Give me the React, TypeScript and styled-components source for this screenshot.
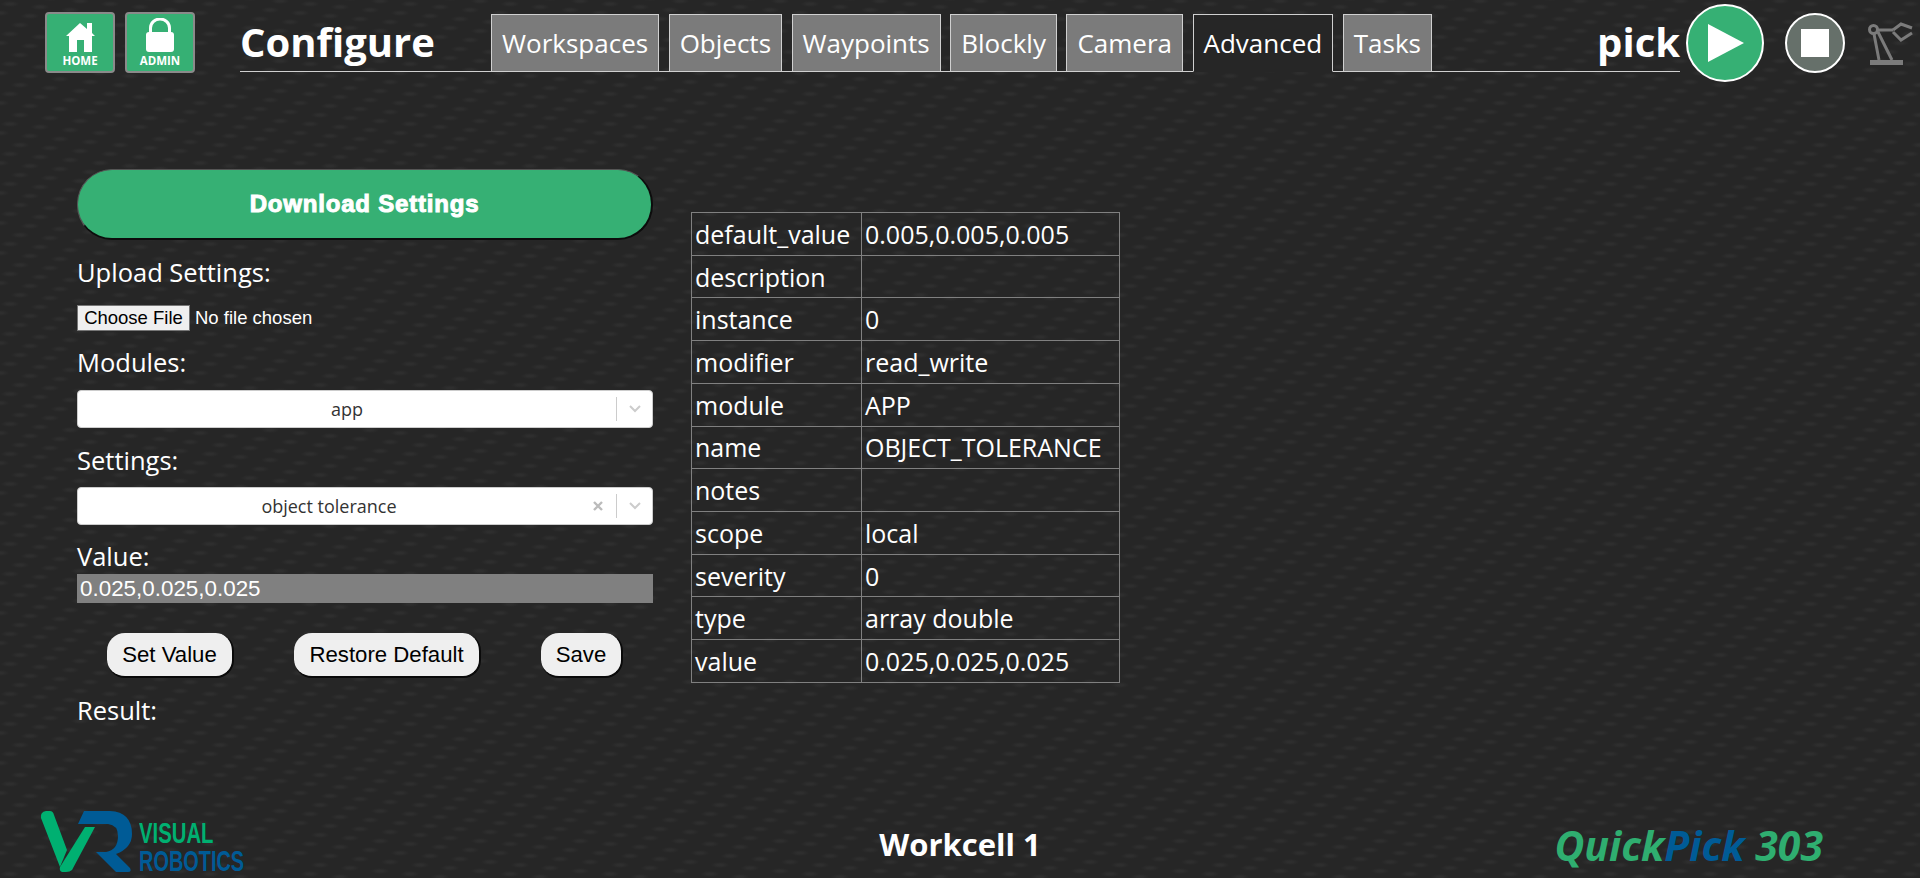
import React from "react";
import styled, { createGlobalStyle } from "styled-components";

const dash = (x: number, y: number) =>
  `radial-gradient(ellipse 9px 3px at ${x}px ${y}px, #2e2e2e 30%, transparent 100%)`;

const carbon = Array.from({ length: 10 }, (_, k) => {
  const x = 10 + 10 * k;
  const y = 4 + ((-9 * k) % 30 + 30) % 30;
  const layers = [dash(x, y)];
  if (x > 90) layers.push(dash(x - 100, y));
  if (y > 26) layers.push(dash(x, y - 30));
  return layers.join(",");
}).join(",");

const Global = createGlobalStyle`
  html, body { margin: 0; padding: 0; height: 100%; overflow: hidden; }
  body {
    background-color: #262626;
    background-image: ${carbon};
    background-size: 100px 30px;
    color: #fff;
    font-family: "Open Sans", "Noto Sans", sans-serif;
  }
`;

const Page = styled.div`
  width: 1920px;
  height: 878px;
  display: flex;
  flex-direction: column;
`;

const Header = styled.header`
  height: 85px;
  display: flex;
  align-items: flex-start;
  padding-left: 45px;
`;

const NavGroup = styled.div`
  display: flex;
  gap: 10px;
  margin-top: 12px;
  width: 195px;
`;

const NavButton = styled.a`
  width: 70px;
  height: 61px;
  box-sizing: border-box;
  border: 2px solid #8a8a8a;
  border-radius: 4px;
  background: #36b074;
  display: flex;
  flex-direction: column;
  align-items: center;
  justify-content: flex-end;
  padding-bottom: 3px;
  gap: 2px;
  font: 700 11.5px/14px "Open Sans", sans-serif;
  color: #fff;
`;

const TitleBar = styled.div`
  width: 1440px;
  height: 72px;
  box-sizing: border-box;
  border-bottom: 1px solid #d0d0d0;
  display: flex;
  align-items: flex-end;
  flex: none;
`;

const Title = styled.h1`
  width: 251px;
  margin: 0;
  font: 700 40px/58px "Open Sans", sans-serif;
  white-space: nowrap;
`;

const Tabs = styled.nav`
  display: flex;
  gap: 9.5px;
  margin-bottom: -1px;
`;

const Tab = styled.div<{ $active?: boolean }>`
  height: 58px;
  box-sizing: border-box;
  border: 1px solid #d0d0d0;
  border-bottom: ${(p) => (p.$active ? "1px solid #262626" : "1px solid #d0d0d0")};
  background: ${(p) => (p.$active ? "#262626" : "#7b7b7b")};
  padding: 0 10px;
  font: 400 26px/56px "Open Sans", sans-serif;
  white-space: nowrap;
`;

const Mode = styled.div`
  margin-left: auto;
  font: 700 40px/58px "Open Sans", sans-serif;
`;

const RoundButton = styled.button<{ $size: number; $bg: string; $top: number; $left: number }>`
  width: ${(p) => p.$size}px;
  height: ${(p) => p.$size}px;
  flex: none;
  margin: ${(p) => p.$top}px 0 0 ${(p) => p.$left}px;
  padding: 0;
  border: 2px solid #fff;
  border-radius: 50%;
  background: ${(p) => p.$bg};
  display: flex;
  align-items: center;
  justify-content: center;
`;

const StopSquare = styled.span`
  display: block;
  width: 28px;
  height: 28px;
  background: #fff;
`;

const RobotIcon = styled.svg`
  flex: none;
  margin: 22px 0 0 23px;
`;

const Main = styled.main`
  display: flex;
  align-items: flex-start;
  padding: 84px 0 0 77px;
`;

const Column = styled.section`
  width: 576px;
  display: flex;
  flex-direction: column;
`;

const DownloadButton = styled.button`
  height: 71px;
  border: none;
  border-bottom: 2px solid #0c0c0c;
  border-right: 2px solid #0c0c0c;
  border-top: 1px solid #555;
  border-left: 1px solid #555;
  border-radius: 35px;
  background: #36b074;
  color: #fff;
  font: 700 24px "Liberation Sans", Arial, sans-serif;
  -webkit-text-stroke: 1px #fff;
  letter-spacing: 0.8px;
`;

const Label = styled.label<{ $top: number }>`
  display: block;
  margin-top: ${(p) => p.$top}px;
  font: 400 25.5px/34px "Open Sans", sans-serif;
  height: 34px;
  white-space: nowrap;
`;

const FileInput = styled.input`
  margin: 16px 0 0;
  height: 26px;
  font: 400 18.5px "Liberation Sans", Arial, sans-serif;
  color: #fff;
  &::file-selector-button {
    height: 26px;
    width: 113px;
    font: 400 18.5px "Liberation Sans", Arial, sans-serif;
    background: #efefef;
    border: 1px solid #767676;
    border-radius: 0;
    margin-right: 5px;
    padding: 0;
    color: #000;
  }
`;

const Select = styled.div<{ $top: number }>`
  margin-top: ${(p) => p.$top}px;
  height: 38px;
  box-sizing: border-box;
  background: #fff;
  border: 1px solid #ccc;
  border-radius: 4px;
  display: flex;
  align-items: center;
`;

const SelectValue = styled.div`
  flex: 1;
  text-align: center;
  font: 400 18px "Open Sans", sans-serif;
  color: #333;
`;

const Clear = styled.span`
  width: 36px;
  text-align: center;
  color: #bbb;
  display: flex;
  justify-content: center;
`;

const Indicator = styled.span`
  width: 35px;
  height: 24px;
  border-left: 1px solid #ccc;
  display: flex;
  align-items: center;
  justify-content: center;
  color: #ccc;
`;

const ValueInput = styled.input`
  margin: 1px 0 0;
  height: 29px;
  box-sizing: border-box;
  border: none;
  padding: 0 3px;
  background: #808080;
  color: #fff;
  font: 400 22.4px "Liberation Sans", Arial, sans-serif;
  outline: none;
`;

const Actions = styled.div`
  display: flex;
  justify-content: flex-start;
  margin-top: 30px;
  padding-left: 30px;
`;

const ActionButton = styled.button<{ $w: number; $gap: number }>`
  width: ${(p) => p.$w}px;
  height: 45px;
  margin-left: ${(p) => p.$gap}px;
  border: none;
  border-right: 2px solid #0a0a0a;
  border-bottom: 2px solid #0a0a0a;
  border-radius: 18px;
  background: #efefef;
  color: #000;
  padding: 0;
  font: 400 22.2px "Liberation Sans", Arial, sans-serif;
`;

const Table = styled.table`
  margin: 43px 0 0 38px;
  width: 429px;
  height: 471px;
  table-layout: fixed;
  border-collapse: collapse;
`;

const Cell = styled.td<{ $w?: number }>`
  ${(p) => (p.$w ? `width: ${p.$w}px;` : "")}
  border: 1px solid #808080;
  padding: 0 3px;
  box-sizing: border-box;
  font: 400 25px/34px "Open Sans", sans-serif;
  white-space: nowrap;
`;

const Footer = styled.footer`
  margin-top: auto;
  height: 68px;
  display: grid;
  grid-template-columns: 880px 80px 1fr;
  align-items: center;
  padding-left: 40px;
`;

const LogoWrap = styled.div`
  display: flex;
  align-items: flex-end;
  gap: 1px;
  height: 68px;
  margin-top: -8px;
`;

const LogoWords = styled.div`
  display: flex;
  flex-direction: column;
  width: 110px;
  font: 700 30px/28px "Liberation Sans", sans-serif;
  margin-bottom: -1px;
`;

const LogoWord = styled.span<{ $c: string; $sx: number }>`
  display: block;
  color: ${(p) => p.$c};
  white-space: nowrap;
  transform: scaleX(${(p) => p.$sx});
  transform-origin: left center;
`;

const Workcell = styled.div`
  font: 700 31px "Open Sans", sans-serif;
  white-space: nowrap;
  justify-self: center;
`;

const Brand = styled.div`
  justify-self: end;
  margin-right: 97px;
  margin-top: 2px;
  font: italic 700 41px "Open Sans", sans-serif;
  color: #2fae70;
  white-space: nowrap;
`;

const BrandBlue = styled.span`
  color: #005b96;
`;

const tabs = ["Workspaces", "Objects", "Waypoints", "Blockly", "Camera", "Advanced", "Tasks"];
const rows: [string, string][] = [
  ["default_value", "0.005,0.005,0.005"],
  ["description", ""],
  ["instance", "0"],
  ["modifier", "read_write"],
  ["module", "APP"],
  ["name", "OBJECT_TOLERANCE"],
  ["notes", ""],
  ["scope", "local"],
  ["severity", "0"],
  ["type", "array double"],
  ["value", "0.025,0.025,0.025"],
];

const Chevron = () => (
  <svg width="14" height="10" viewBox="0 0 14 10" fill="none" stroke="currentColor" strokeWidth="2">
    <path d="M2 2l5 5 5-5" />
  </svg>
);

export default function App() {
  return (
    <Page>
      <Global />
      <Header>
        <NavGroup>
          <NavButton>
            <svg width="29" height="29" viewBox="0 0 29 29" fill="#fff">
              <path d="M14 0 L21 6 V0 H26 V10 L29 13 H26 V29 H18 V17 H11 V29 H3 V13 H0 Z" />
            </svg>
            HOME
          </NavButton>
          <NavButton>
            <svg width="28" height="34" viewBox="0 0 28 34" fill="#fff">
              <rect x="0" y="14" width="28" height="20" rx="3" />
              <path d="M4.5 15 V10 A9.5 9 0 0 1 23.5 10 V15" fill="none" stroke="#fff" strokeWidth="3" />
            </svg>
            ADMIN
          </NavButton>
        </NavGroup>
        <TitleBar>
          <Title>Configure</Title>
          <Tabs>
            {tabs.map((t) => (
              <Tab key={t} $active={t === "Advanced"}>
                {t}
              </Tab>
            ))}
          </Tabs>
          <Mode>pick</Mode>
        </TitleBar>
        <RoundButton $size={78} $bg="#36b074" $top={4} $left={6}>
          <svg width="38" height="40" viewBox="-2 0 38 40" fill="#fff">
            <path d="M0 1 L36 20 L0 39 Z" />
          </svg>
        </RoundButton>
        <RoundButton $size={60} $bg="#66706a" $top={13} $left={21}>
          <StopSquare />
        </RoundButton>
        <RobotIcon width="46" height="44" viewBox="0 0 46 44" fill="none" stroke="#7b7b7b" strokeWidth="3">
          <rect x="2" y="38" width="33" height="5" fill="#7b7b7b" stroke="none" />
          <circle cx="5.5" cy="7.5" r="4" />
          <path d="M6 12 L11 38 M10 10 L24 38 M10 8 H25" />
          <path d="M25 8 L33 2 L44 6 M25 10 L33 18 L44 11" />
        </RobotIcon>
      </Header>
      <Main>
        <Column>
          <DownloadButton>Download Settings</DownloadButton>
          <Label $top={15}>Upload Settings:</Label>
          <FileInput type="file" />
          <Label $top={14}>Modules:</Label>
          <Select $top={11}>
            <SelectValue>app</SelectValue>
            <Indicator>
              <Chevron />
            </Indicator>
          </Select>
          <Label $top={15}>Settings:</Label>
          <Select $top={10}>
            <SelectValue>object tolerance</SelectValue>
            <Clear>
              <svg width="12" height="12" viewBox="0 0 12 12" stroke="currentColor" strokeWidth="2.4">
                <path d="M2 2l8 8M10 2l-8 8" />
              </svg>
            </Clear>
            <Indicator>
              <Chevron />
            </Indicator>
          </Select>
          <Label $top={14}>Value:</Label>
          <ValueInput readOnly value="0.025,0.025,0.025" />
          <Actions>
            <ActionButton $w={127} $gap={0}>Set Value</ActionButton>
            <ActionButton $w={187} $gap={60}>Restore Default</ActionButton>
            <ActionButton $w={82} $gap={60}>Save</ActionButton>
          </Actions>
          <Label $top={15}>Result:</Label>
        </Column>
        <Table>
          <tbody>
            {rows.map(([k, v], i) => (
              <tr key={k}>
                <Cell $w={i === 0 ? 170 : undefined}>{k}</Cell>
                <Cell>{v}</Cell>
              </tr>
            ))}
          </tbody>
        </Table>
      </Main>
      <Footer>
        <LogoWrap>
          <svg width="98" height="64" viewBox="0 0 98 64">
            <path d="M1 8 Q0 2 6 1 H10 Q13 1 14 5 L27 40 L20 57 Z" fill="#00b071" />
            <path d="M45 17 H55 L32 60 Q30 62 26 62 H22 Q19 61 20 57 Z" fill="#00b071" />
            <path d="M44 1 H70 Q92 2 92 24 Q92 38 76 44 L90 58 Q92 62 88 62 H76 L56 42 H66 Q78 40 78 26 Q78 15 68 14 H38 Z" fill="#005b96" />
          </svg>
          <LogoWords>
            <LogoWord $c="#00b071" $sx={0.677}>VISUAL</LogoWord>
            <LogoWord $c="#005b96" $sx={0.664}>ROBOTICS</LogoWord>
          </LogoWords>
        </LogoWrap>
        <Workcell>Workcell 1</Workcell>
        <Brand>
          Quick<BrandBlue>Pick</BrandBlue> 303
        </Brand>
      </Footer>
    </Page>
  );
}
